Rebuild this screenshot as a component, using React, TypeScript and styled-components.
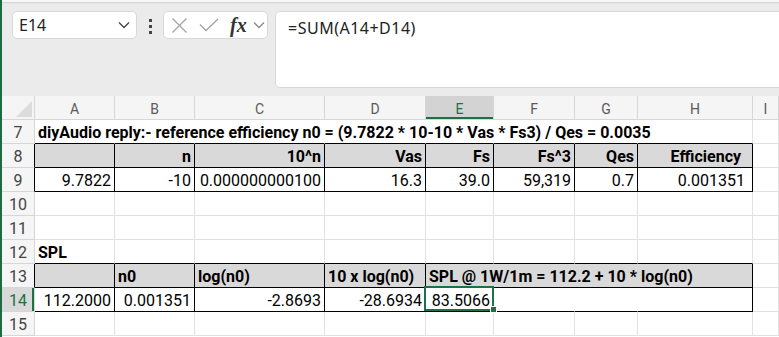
import React from 'react';
import styled, { createGlobalStyle, css } from 'styled-components';

const GREEN = '#1e7145';
const GRID = '#e1e1e1';
const HEAD_LINE = '#d6d6d6';

const Global = createGlobalStyle`
  html, body { margin: 0; padding: 0; background: #fff; overflow: hidden; }
  #root { width: 779px; height: 337px; }
`;

const Window = styled.div`
  width: 779px;
  height: 337px;
  box-sizing: border-box;
  border-left: 2px solid #1f6b41;
  display: flex;
  flex-direction: column;
  overflow: hidden;
  font-family: Roboto, "Liberation Sans", sans-serif;
`;

const FormulaBar = styled.div`
  flex: none;
  height: 96px;
  box-sizing: border-box;
  display: flex;
  align-items: flex-start;
  padding: 11px 0 0 10px;
  background: linear-gradient(#f6f6f6 0 2px, #d9d9d9 2px 3px, #e5e5e5 3px 4px, #ebebeb 4px);
`;

const NameBox = styled.div`
  width: 125px;
  height: 28px;
  box-sizing: border-box;
  background: #fff;
  border: 1px solid #d8d8d8;
  border-radius: 5px;
  display: flex;
  align-items: center;
  justify-content: space-between;
  padding: 0 6px 0 6px;
  font-family: "Noto Sans", sans-serif;
  font-size: 16px;
  color: #222;
`;

const Dots = styled.div`
  width: 26px;
  margin-top: 8px;
  display: flex;
  flex-direction: column;
  align-items: center;
  gap: 3px;
  & > span {
    width: 3px;
    height: 3px;
    background: #444;
  }
`;

const FnBox = styled.div`
  width: 105px;
  height: 28px;
  box-sizing: border-box;
  background: #fff;
  border: 1px solid #d8d8d8;
  border-radius: 5px;
  display: flex;
  align-items: center;
  padding: 0 0 0 7px;
`;

const Fx = styled.span`
  font-family: "Liberation Serif", serif;
  font-style: italic;
  font-weight: bold;
  font-size: 20px;
  color: #333;
  margin-left: 11px;
  line-height: 1;
`;

const SmallChevron = styled.span`
  display: flex;
  margin-left: 6px;
`;

const FormulaInput = styled.div`
  flex: 1;
  margin-left: 7px;
  margin-right: -8px;
  height: 77px;
  box-sizing: border-box;
  background: #fff;
  border: 1px solid #d8d8d8;
  border-radius: 5px;
  padding: 6px 0 0 12px;
  font-family: "Noto Sans", sans-serif;
  font-size: 16px;
  letter-spacing: 0.5px;
  line-height: 20px;
  color: #222;
`;

const Sheet = styled.div`
  flex: 1;
  display: flex;
  flex-direction: column;
`;

const Row = styled.div`
  display: flex;
  flex: none;
  height: 24px;
`;

const Corner = styled.div`
  width: 33px;
  flex: none;
  box-sizing: border-box;
  background: #f5f5f5;
  border-right: 1px solid ${HEAD_LINE};
  border-bottom: 1px solid ${HEAD_LINE};
  display: flex;
  align-items: flex-end;
  justify-content: flex-end;
`;

const ColHead = styled.div<{ $w: number; $sel?: boolean; $grow?: boolean }>`
  width: ${p => p.$w}px;
  flex: ${p => (p.$grow ? '1 0 auto' : 'none')};
  box-sizing: border-box;
  border-right: 1px solid ${HEAD_LINE};
  border-bottom: 1px solid ${HEAD_LINE};
  background: ${p => (p.$sel ? '#d3d3d3' : '#f5f5f5')};
  color: ${p => (p.$sel ? GREEN : '#5a5a5a')};
  box-shadow: ${p => (p.$sel ? `inset 0 -2px 0 ${GREEN}` : 'none')};
  text-align: center;
  font-size: 14px;
  line-height: 26px;
`;

const RowHead = styled.div<{ $edge?: boolean; $sel?: boolean }>`
  width: 33px;
  flex: none;
  box-sizing: border-box;
  background: ${p => (p.$sel ? '#d9d9d9' : '#f5f5f5')};
  color: ${p => (p.$sel ? GREEN : '#444')};
  border-right: 1px solid ${p => (p.$edge ? '#000' : HEAD_LINE)};
  border-bottom: 1px solid ${HEAD_LINE};
  box-shadow: ${p => (p.$sel ? `inset -2px 0 0 ${GREEN}` : 'none')};
  text-align: center;
  font-size: 16px;
  line-height: 26px;
  overflow: hidden;
`;

type Border = 'k' | 'g' | 'n';
const borderColor = (b: Border | undefined) => (b === 'k' ? '#000' : b === 'n' ? 'transparent' : GRID);

const Cell = styled.div<{
  $w: number;
  $grow?: boolean;
  $al?: 'l' | 'r';
  $bold?: boolean;
  $fill?: boolean;
  $r?: Border;
  $b?: Border;
  $sel?: boolean;
}>`
  width: ${p => p.$w}px;
  flex: ${p => (p.$grow ? '1 0 auto' : 'none')};
  box-sizing: border-box;
  height: 24px;
  padding: 0 3px;
  border-right: 1px solid ${p => borderColor(p.$r)};
  border-bottom: 1px solid ${p => borderColor(p.$b)};
  background: ${p => (p.$fill ? '#d9d9d9' : 'transparent')};
  text-align: ${p => (p.$al === 'r' ? 'right' : 'left')};
  font-weight: ${p => (p.$bold ? 700 : 400)};
  font-size: 16px;
  line-height: 26px;
  color: #000;
  white-space: pre;
  ${p =>
    p.$sel &&
    css`
      position: relative;
    `}
`;

const Selection = styled.div`
  position: absolute;
  top: -2px;
  left: -2px;
  right: -1px;
  bottom: 0;
  border: 2px solid ${GREEN};
  pointer-events: none;
`;

const Handle = styled.div`
  position: absolute;
  right: -5px;
  bottom: -4px;
  width: 5px;
  height: 5px;
  background: ${GREEN};
  border: 1px solid #fff;
`;

const COLS = [
  { k: 'A', w: 80 },
  { k: 'B', w: 80 },
  { k: 'C', w: 130 },
  { k: 'D', w: 101 },
  { k: 'E', w: 68 },
  { k: 'F', w: 81 },
  { k: 'G', w: 63 },
  { k: 'H', w: 115 },
  { k: 'I', w: 26 },
];

interface CellSpec {
  t?: string;
  al?: 'l' | 'r';
  bold?: boolean;
  fill?: boolean;
  r?: Border;
  b?: Border;
  sel?: boolean;
  span?: number;
}

interface RowSpec {
  n: number;
  edge?: boolean;
  sel?: boolean;
  cells: CellSpec[];
}

const inTable = (i: number) => i < 8;
const blank = (): CellSpec[] => COLS.map(() => ({}));

const H8 = ['', 'n', '10^n', 'Vas', 'Fs', 'Fs^3', 'Qes', 'Efficiency  '];
const V9 = ['9.7822', '-10', '0.000000000100', '16.3', '39.0', '59,319', '0.7', '0.001351 '];
const V14 = ['112.2000', '0.001351', '-2.8693', '-28.6934', '83.5066'];

const mergedGap = (i: number) => i >= 4 && i < 7;

const ROWS: RowSpec[] = [
  {
    n: 7,
    cells: COLS.map((_, i) =>
      inTable(i)
        ? {
            t: i === 0 ? 'diyAudio reply:- reference efficiency n0 = (9.7822 * 10-10 * Vas * Fs3) / Qes = 0.0035' : undefined,
            bold: true,
            r: i < 7 ? 'n' : 'g',
            b: 'k',
          }
        : {}
    ),
  },
  {
    n: 8,
    edge: true,
    cells: COLS.map((_, i) => (inTable(i) ? { t: H8[i], al: 'r', bold: true, fill: true, r: 'k', b: 'k' } : {})),
  },
  {
    n: 9,
    edge: true,
    cells: COLS.map((_, i) => (inTable(i) ? { t: V9[i], al: 'r', r: 'k', b: 'k' } : {})),
  },
  { n: 10, cells: blank() },
  { n: 11, cells: blank() },
  {
    n: 12,
    cells: COLS.map((_, i) => (inTable(i) ? { t: i === 0 ? 'SPL' : undefined, bold: true, b: 'k' } : {})),
  },
  {
    n: 13,
    edge: true,
    cells: [
      { t: '', bold: true, fill: true, r: 'k', b: 'k' },
      { t: 'n0', bold: true, fill: true, r: 'k', b: 'k' },
      { t: 'log(n0)', bold: true, fill: true, r: 'k', b: 'k' },
      { t: '10 x log(n0)', bold: true, fill: true, r: 'k', b: 'k' },
      { t: 'SPL @ 1W/1m = 112.2 + 10 * log(n0)', bold: true, fill: true, r: 'k', b: 'k', span: 4 },
      {},
    ],
  },
  {
    n: 14,
    sel: true,
    cells: COLS.map((_, i) =>
      inTable(i) ? { t: V14[i], al: 'r', r: mergedGap(i) ? 'n' : 'k', b: 'k', sel: i === 4 } : {}
    ),
  },
  { n: 15, cells: blank() },
];

const Chevron = ({ color = '#444', w = 12 }: { color?: string; w?: number }) => (
  <svg width={w} height={8} viewBox="0 0 12 8" fill="none">
    <path d="M1 1.5 L6 6.5 L11 1.5" stroke={color} strokeWidth="1.3" />
  </svg>
);

function renderCells(cells: CellSpec[]) {
  let col = 0;
  return cells.map((c, idx) => {
    const span = c.span ?? 1;
    const start = col;
    col += span;
    const w = COLS.slice(start, start + span).reduce((s, x) => s + x.w, 0);
    const last = start + span >= COLS.length;
    return (
      <Cell
        key={idx}
        $w={w}
        $grow={last}
        $al={c.al}
        $bold={c.bold}
        $fill={c.fill}
        $r={c.r}
        $b={c.b}
        $sel={c.sel}
      >
        {c.t}
        {c.sel && (
          <Selection>
            <Handle />
          </Selection>
        )}
      </Cell>
    );
  });
}

export default function App() {
  return (
    <>
      <Global />
      <Window>
        <FormulaBar>
          <NameBox>
            <span>E14</span>
            <Chevron />
          </NameBox>
          <Dots>
            <span />
            <span />
            <span />
          </Dots>
          <FnBox>
            <svg width="17" height="17" viewBox="0 0 17 17" fill="none">
              <path d="M1.5 1.5 L15.5 15.5 M15.5 1.5 L1.5 15.5" stroke="#a3a3a3" strokeWidth="1.3" />
            </svg>
            <svg width="20" height="14" viewBox="0 0 20 14" fill="none" style={{ marginLeft: 11 }}>
              <path d="M1 6.5 L7 12.5 L19 1" stroke="#a3a3a3" strokeWidth="1.3" />
            </svg>
            <Fx>fx</Fx>
            <SmallChevron>
              <Chevron color="#8a8a8a" w={12} />
            </SmallChevron>
          </FnBox>
          <FormulaInput>=SUM(A14+D14)</FormulaInput>
        </FormulaBar>
        <Sheet>
          <Row>
            <Corner>
              <svg width="20" height="20" viewBox="0 0 20 20">
                <polygon points="2,18 18,18 18,2" fill="#dcdcdc" />
              </svg>
            </Corner>
            {COLS.map((c, i) => (
              <ColHead key={c.k} $w={c.w} $sel={c.k === 'E'} $grow={i === COLS.length - 1}>
                {c.k}
              </ColHead>
            ))}
          </Row>
          {ROWS.map(r => (
            <Row key={r.n}>
              <RowHead $edge={r.edge} $sel={r.sel}>
                {r.n}
              </RowHead>
              {renderCells(r.cells)}
            </Row>
          ))}
        </Sheet>
      </Window>
    </>
  );
}
